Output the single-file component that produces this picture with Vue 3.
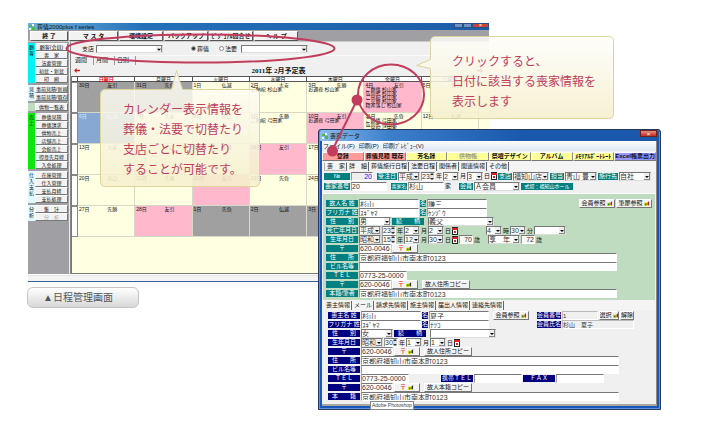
<script setup>
const mainMenu = ['終 了', 'マ ス タ', '環境設定', 'バックアップ', 'ﾋﾞｼﾞｭｱﾙ問合せ', 'ヘ ル プ']

const sideGroups = [
  { tag: '顧 客', tone: 'cyan', items: ['顧客(会員)', '喪　家', '法要管理', '初盆・新盆', '印　刷'] },
  { tag: '見 積', tone: 'pale', items: ['事前見積/新規', '事前見積/既存'] },
  { tag: '', tone: 'mint', items: ['供物一覧表'] },
  { tag: '売 上', tone: 'lime', items: ['葬儀見積', '葬儀請求', '供物売上', '店舗売上', '会館売上', '得意先月締', '入金処理'] },
  { tag: '仕入・支払', tone: 'pale', items: ['在庫管理', '仕入管理', '支払月締', '支払処理'] },
  { tag: '分 析', tone: 'pale', items: ['集　計', '分　析'] },
]

const weekdays = ['日曜日', '月曜日', '火曜日', '水曜日', '木曜日', '金曜日', '土曜日']
const day = (n, luck, tone = '', ev = []) => ({ n, luck, tone, ev })
const weeks = [
  [day(30, '友引', 'grey'), day(31, '先負', 'grey'), day(1, '仏滅'), day(2, '大安', '', ['ご納棺 杉山家']), day(3, '先勝', '', ['お通夜 杉山家']),
    day(4, '友引', 'pink', ['ご葬儀 杉山家', '告別式 杉山家', 'ご出棺 杉山家', 'ご火葬 杉山家', '精進落し 杉山家']), day(5, '先負')],
  [day(6, '仏滅', 'blue'), day(7, '大安'), day(8, '赤口'), day(9, '先勝', '', ['ご納棺 弓田家']), day(10, '友引', 'pink', ['お通夜 弓田家']),
    day(11, '先負', '', ['ご葬儀 弓田家', '告別式 弓田家', 'ご出棺 弓田家']), day(12, '仏滅')],
  [day(13, '大安'), day(14, '赤口'), day(15, '先勝'), day(16, '友引', 'pink'), day(17, '先負'), day(18, '仏滅'), day(19, '大安')],
  [day(20, '赤口'), day(21, '先勝'), day(22, '友引', 'pink'), day(23, '先負'), day(24, '仏滅'), day(25, '大安'), day(26, '赤口')],
  [day(27, '先勝'), day(28, '友引', 'pink'), day(1, '先負', 'grey'), day(2, '仏滅', 'grey'), day(3, '大安', 'grey'), day(4, '赤口', 'grey'), day(5, '先勝', 'grey')],
]

const actions = [
  ['登録', 'rose'], ['葬儀見積 既存', 'rose'], ['芳名録', 'lemon'], ['供物帳', 'lemon off'],
  ['祭壇デザイン', 'lemon'], ['アルバム', 'lemon'], ['ﾒﾓﾘｱﾙﾎﾟｰﾄﾚｰﾄ', 'lemon'], ['Excel帳票出力', 'violet'],
]
const tabs = ['喪　家', '詳　細', '葬儀施行日程', '法要日程', '関係者', '関連情報', 'その他']
const subTabs = ['喪主情報', 'メール', '請求先情報', '施主情報', '届出人情報', '連絡先情報']

// Row items: [kind, width step, text, extra class]
const L = (w, v) => ({ k: 'label', w, v })
const I = (w, v = '', c = '') => ({ k: 'input', w, v, c })
const S = (w, v = '') => ({ k: 'select', w, v })
const N = (v) => ({ k: 'spin', w: 14, v })
const T = (v) => ({ k: 'text', w: 6, v })
const B = (w, v, icon = false) => ({ k: 'button', w, v, icon })
const G = (w) => ({ k: 'gap', w })
const C = () => ({ k: 'cal', w: 6 })
const post = (v) => ({ k: 'post', w: 26, v })

let serial = 0
const build = (rows) => rows.map((row) => {
  let caption = ''
  const out = row.map((it) => {
    if (it.k === 'label') caption = it.v
    return { ...it, id: 'f' + ++serial, name: caption }
  })
  out.forEach((it, i) => {
    if (it.k !== 'label') return
    const field = out.slice(i + 1).find((o) => ['input', 'select', 'spin'].includes(o.k))
    it.target = field && field.id
  })
  return out
})

const address = '京都府福知山市南本町0123'
const groups = [
  { cls: 'head', rows: build([
    [L(26, '№'), I(22, '20', 'num'), G(2), L(20, '受注日'), S(22, '平成'), N('23'), T('年'), S(16, '2'), T('月'), S(16, '3'), T('日'), C(),
      L(14, '支店'), S(36, '福知山店'), L(14, '担当'), S(32, '青山 豊'), L(20, '施行先'), S(32, '自社')],
    [L(26, '喪家番号'), I(36, '20'), G(2), L(16, '喪家名'), I(36, '杉山'), T('家'), G(6), L(14, '会員'), S(46, 'Ａ会員'), L(52, '式場：福知山ホール')],
  ]) },
  { cls: 'deceased', rows: build([
    [L(32, '故人名 姓'), I(60, '杉山'), L(6, '名'), I(60, '謙三'), { k: 'push' }, B(36, '会員参照', true), B(36, '筆屡参照', true)],
    [L(32, 'フリガナ 姓'), I(60, 'ｽｷﾞﾔﾏ'), L(6, '名'), I(60, 'ｹﾝｿﾞｳ')],
    [L(32, '性　　別'), S(32, '男'), L(32, '続　　柄'), G(2), S(66, '義父')],
    [L(32, '死亡年月日'), S(22, '平成'), N('23'), T('年'), S(16, '2'), T('月'), S(16, '2'), T('日'), C(), G(26), S(16, '4'), T('時'), S(16, '30'), T('分'), S(32)],
    [L(32, '生年月日'), S(22, '昭和'), N('15'), T('年'), S(16, '12'), T('月'), S(16, '30'), T('日'), C(), I(14, '70', 'right'), T('歳'), G(6), S(32, '享　年'), I(14, '72', 'right'), T('歳')],
    [L(32, '〒'), I(32, '620-0046'), post('住所検索')],
    [L(32, '住　　所'), I(260, address)],
    [L(32, 'ビル名等'), I(260)],
    [L(32, 'ＴＥＬ'), I(48, '0773-25-0000')],
    [L(32, '〒'), I(32, '620-0046'), post('住所検索'), G(2), B(48, '故人住所コピー')],
    [L(32, '本籍/筆者'), I(260, address)],
  ]) },
  { cls: 'mourner', rows: build([
    [L(32, '喪主名 姓'), I(60, '杉山'), L(6, '名'), I(60, '夏子'), G(2), B(36, '会員参照', true), G(6), L(24, '会員番号'), I(36, '1', 'flat'), B(20, '選択', true), B(14, '解除')],
    [L(32, 'フリガナ 姓'), I(60, 'ｽｷﾞﾔﾏ'), L(6, '名'), I(60, 'ﾅﾂｺ'), G(46), L(24, '会員氏名'), I(72, '杉山　夏子', 'flat')],
    [L(32, '性　　別'), S(32, '女'), L(32, '続　　柄'), G(2), S(66)],
    [L(32, '生年月日'), S(22, '昭和'), N('30'), T('年'), S(16, '1'), T('月'), S(16, '1'), T('日'), C()],
    [L(32, '〒'), I(32, '620-0046'), post('住所検索'), G(2), B(48, '故人住所コピー')],
    [L(32, '住　　所'), I(260, address)],
    [L(32, 'ビル名等'), I(260)],
    [L(32, 'ＴＥＬ'), I(48, '0773-25-0000'), G(30), L(32, '携帯ＴＥＬ'), I(48), L(32, 'ＦＡＸ'), I(48)],
    [L(32, '〒'), I(32, '620-0046'), post('住所検索'), G(2), B(48, '故人本籍コピー')],
    [L(32, '本　　籍'), I(260, address)],
  ]) },
]
</script>

<template>
  <main class="stage">
    <section class="window schedule">
      <header class="titlebar">
        <svg class="appicon" viewBox="0 0 6 6"><path d="M0 1h3v2H0zM3 3h3v3H3z" fill="#4db848" /><path d="M3 0h2v2H3zM0 4h2v2H0z" fill="#fff" /></svg>
        <span class="caption">葬儀2000plus f series</span>
        <span class="winbtns"><i></i><i></i><i class="close">×</i></span>
      </header>
      <nav class="menu">
        <button v-for="m in mainMenu" :key="m" type="button">{{ m }}</button>
      </nav>
      <div class="body">
        <aside class="side">
          <div v-for="(g, gi) in sideGroups" :key="gi" class="group">
            <span class="tag" :class="g.tone">{{ g.tag }}</span>
            <div class="items">
              <button v-for="s in g.items" :key="s" type="button" :disabled="s === '分　析'">{{ s }}</button>
            </div>
          </div>
        </aside>
        <div class="work">
          <div class="filter">
            <label for="branch">支店</label>
            <select id="branch"><option></option></select>
            <label class="radio first"><input type="radio" name="kind" checked>葬儀</label>
            <label class="radio"><input type="radio" name="kind">法要</label>
            <select aria-label="法要"><option></option></select>
          </div>
          <div class="views"><a href="#week">週間</a><a href="#month">月間</a><a href="#day">日別</a></div>
          <div class="month">
            <svg class="arrow" viewBox="0 0 7 6"><path d="M0 3l3-3v2h4v2H3v2z" fill="#d01818" /></svg>
            <h1>2011年 2月予定表</h1>
            <svg class="arrow" viewBox="0 0 7 6"><path d="M7 3L4 0v2H0v2h4v2z" fill="#d01818" /></svg>
          </div>
          <div class="sheet">
            <table>
              <thead><tr><th class="edge"></th><th v-for="w in weekdays" :key="w">{{ w }}</th></tr></thead>
              <tbody>
                <tr v-for="(wk, wi) in weeks" :key="wi">
                  <th class="edge"></th>
                  <td v-for="(d, di) in wk" :key="di" :class="d.tone">
                    <div class="date"><span>{{ d.n }}日</span><span>{{ d.luck }}</span></div>
                    <div v-for="e in d.ev" :key="e" class="event">{{ e }}</div>
                  </td>
                </tr>
              </tbody>
            </table>
          </div>
        </div>
      </div>
      <footer class="status"></footer>
    </section>

    <p class="plate">▲日程管理画面</p>

    <section class="window dialog">
      <header class="titlebar">
        <svg class="appicon" viewBox="0 0 6 6"><path d="M0 1h3v2H0zM3 3h3v3H3z" fill="#4db848" /><path d="M3 0h2v2H3zM0 4h2v2H0z" fill="#fff" /></svg>
        <span class="caption">喪家データ</span>
        <button type="button" class="close" aria-label="閉じる">×</button>
      </header>
      <div class="client">
        <nav class="bar"><span>ファイル(F)</span><span>印刷(P)</span><span>印刷ﾌﾟﾚﾋﾞｭｰ(V)</span></nav>
        <div class="actions"><button v-for="a in actions" :key="a[0]" type="button" :class="a[1]">{{ a[0] }}</button></div>
        <template v-for="g in groups" :key="g.cls">
          <div v-if="g.cls === 'head'" class="tabs"><a v-for="t in tabs" :key="t" href="#tab">{{ t }}</a></div>
          <div v-if="g.cls === 'mourner'" class="tabs sub"><a v-for="t in subTabs" :key="t" href="#sub">{{ t }}</a></div>
          <div class="panel" :class="g.cls">
            <div v-for="(row, ri) in g.rows" :key="ri" class="line">
              <template v-for="it in row" :key="it.id">
                <label v-if="it.k === 'label'" class="cap" :class="'w' + it.w" :for="it.target">{{ it.v }}</label>
                <input v-else-if="it.k === 'input'" :id="it.id" type="text" :class="['w' + it.w, it.c]" :value="it.v" :aria-label="it.name">
                <input v-else-if="it.k === 'spin'" :id="it.id" type="text" class="w14 spin" :value="it.v" :aria-label="it.name">
                <select v-else-if="it.k === 'select'" :id="it.id" :class="'w' + it.w" :aria-label="it.name"><option>{{ it.v }}</option></select>
                <button v-else-if="it.k === 'button'" type="button" :class="'w' + it.w">{{ it.v }}<svg v-if="it.icon" viewBox="0 0 7 6"><path d="M0 2h4v4H0z" fill="#e8d800" /><path d="M1 3h2v2H1z" fill="#0a8a3a" /><path d="M4 2l2-2v6L4 4z" fill="#c02020" /></svg></button>
                <button v-else-if="it.k === 'post'" type="button" class="w26 post" :aria-label="it.v"><b>〒</b><svg viewBox="0 0 7 6"><path d="M0 2h4v4H0z" fill="#e8d800" /><path d="M1 3h2v2H1z" fill="#0a8a3a" /><path d="M4 2l2-2v6L4 4z" fill="#333" /></svg></button>
                <span v-else-if="it.k === 'text'" class="unit w6">{{ it.v }}</span>
                <svg v-else-if="it.k === 'cal'" class="w6 calicon" viewBox="0 0 6 8"><path d="M0 0h6v8H0z" fill="#222" /><path d="M1 3h4v4H1z" fill="#fff" /><path d="M0 1h6v2H0zM2 4h2v2H2z" fill="#e02020" /></svg>
                <span v-else-if="it.k === 'push'" class="push"></span>
                <span v-else :class="'w' + it.w"></span>
              </template>
            </div>
          </div>
        </template>
      </div>
    </section>

    <span class="tip">Adobe Photoshop</span>

    <svg class="overlay" width="715" height="428" viewBox="0 0 715 428">
      <defs>
        <linearGradient id="paper" x1="0" y1="0" x2="0" y2="1">
          <stop offset="0" stop-color="#fefefa" stop-opacity=".84" />
          <stop offset="1" stop-color="#f5efcc" stop-opacity=".88" />
        </linearGradient>
      </defs>
      <g fill="none" stroke="#c23c5c" stroke-width="2">
        <ellipse cx="200.500" cy="48.500" rx="134" ry="14" />
        <ellipse cx="391" cy="94.500" rx="33" ry="30" />
        <path d="M357 100L332 151" />
      </g>
      <g fill="#c23c5c"><circle cx="357" cy="100" r="5.500" /><circle cx="332.500" cy="151" r="5.500" /></g>
      <g fill="url(#paper)" stroke="#dcd49c">
        <path d="M105.500 89.500H171.500L176.500 70.500L182.500 89.500H254.500q5 0 5 5V181.500q0 5-5 5H105.500q-5 0-5-5V94.500q0-5 5-5z" />
        <path d="M435.500 36.500H608.500q5 0 5 5V113.500q0 5-5 5H435.500q-5 0-5-5V68.500L416.500 65.500L430.500 59.500V41.500q0-5 5-5z" />
      </g>
    </svg>
    <p class="note switch">カレンダー表示情報を<br>葬儀・法要で切替たり<br>支店ごとに切替たり<br>することが可能です。</p>
    <p class="note click">クリックすると、<br>日付に該当する喪家情報を<br>表示します</p>
  </main>
</template>

<style>
body { background: #fff; }
</style>

<style scoped>
* { box-sizing: border-box; }
.stage { position: relative; min-height: 100vh; overflow: hidden; font: 6px/8px "Liberation Sans", "Noto Sans CJK JP", sans-serif; color: #111; }
button, input, select { font: inherit; color: inherit; margin: 0; padding: 0; border-radius: 0; min-width: 0; }
a { color: inherit; text-decoration: none; }
button { background: #f2f2f2; border: 1px solid; border-color: #fff #777 #777 #fff; white-space: nowrap; overflow: hidden; line-height: 6px; }
select { appearance: none; border: 1px solid; border-color: #777 #ddd #ddd #777; background: #fff url("data:image/svg+xml,%3Csvg xmlns='http://www.w3.org/2000/svg' viewBox='0 0 6 7'%3E%3Cpath d='M0 0h6v7H0z' fill='%23eee'/%3E%3Cpath d='M5 0h1v7H0V6h5z' fill='%23888'/%3E%3Cpath d='M1 3h4L3 5z' fill='%23000'/%3E%3C/svg%3E") right center / 6px 7px no-repeat; }
.window { position: absolute; }
.titlebar { display: flex; align-items: center; gap: 2px; }
.appicon { width: 6px; height: 6px; flex: none; }
.caption { flex: 1; white-space: nowrap; }

.schedule { left: 28px; top: 23px; width: 461px; background: #f0f0f0; border-bottom: 1px solid #365f96; }
.schedule .titlebar { height: 7px; padding-left: 1px; background: linear-gradient(90deg, #6fb4dc, #2470b8 25%, #1c5ca8); }
.winbtns { display: flex; align-self: flex-start; }
.winbtns i { width: 9px; height: 5px; background: #6d94c4; border: 1px solid #284f86; }
.winbtns .close { width: 17px; background: #cc4433; color: #fff; font-style: normal; line-height: 3px; text-align: center; }
.menu { display: flex; background: #a0a0a4; padding: 1px 2px 0; height: 12px; gap: 1px; border-bottom: 1px solid #ccc; }
.menu button { width: 44px; height: 10px; font-weight: bold; border-color: #fff #555 #555 #fff; line-height: 8px; }
.menu button:first-child { width: 38px; }
.menu button:nth-child(2) { width: 49px; }
.body { display: flex; }
.side { width: 42px; background: #a0a0a4; border-right: 1px solid #eee; display: flex; flex-direction: column; gap: 2px; padding: 1px 1px 0 0; flex: none; }
.group { display: flex; }
.tag { width: 7px; font-size: 5px; line-height: 6px; padding: 1px; text-align: center; word-break: break-all; }
.cyan { background: #00f4f4; }
.pale { background: #e0f8ff; }
.mint { background: #c0dcc0; }
.lime { background: #0ce80c; }
.items { display: flex; flex-direction: column; flex: 1; }
.items button { height: 8px; font-size: 5px; }
.items button:disabled { color: #aaa; }
.work { flex: 1; min-width: 0; border-left: 1px solid #888; }
.filter { display: flex; align-items: center; height: 14px; padding-left: 11px; gap: 2px; border-bottom: 1px solid #fafafa; }
.filter select { width: 67px; height: 8px; }
.radio { display: flex; align-items: center; gap: 1px; margin-left: 8px; margin-right: 2px; }
.radio.first { margin-left: 26px; margin-right: 0; }
.radio input { appearance: none; width: 5px; height: 5px; border: 1px solid #888; border-radius: 50%; background: #fff; }
.radio input:checked { background: #333; border-color: #aaa; }
.views { display: flex; padding-left: 4px; height: 9px; }
.views a { padding-right: 6px; margin-right: 2px; line-height: 9px; border-right: 1px solid #999; }
.month { display: flex; align-items: center; justify-content: space-between; height: 11px; padding: 0 6px 0 3px; }
.month h1 { margin: 0; font: bold 7px/10px "Liberation Serif", "Noto Sans CJK JP", serif; }
.arrow { width: 6px; height: 5px; }
.sheet { background: #ffffe1; min-height: 198px; padding-right: 10px; border-left: 1px solid #777; border-bottom: 1px solid #777; }
table { width: 100%; table-layout: fixed; border-spacing: 0; font-size: 5px; line-height: 4px; }
th { height: 6px; padding: 0; background: #fff; border: solid #555; border-width: 1px 1px 1px 0; font-weight: normal; line-height: 4px; }
th.edge { width: 6px; }
tbody th { border-color: #888; }
thead th:nth-child(2) { color: #e00; font-weight: bold; }
thead th:last-child { color: #22c; }
td { height: 31px; padding: 1px; vertical-align: top; border: solid #d8d8c8; border-width: 0 1px 1px 0; }
.date { display: flex; justify-content: space-between; padding-right: 16px; }
.event { white-space: nowrap; }
.grey { background: #a0a0a0; }
.pink { background: #ffb8cc; }
.blue { background: #88a8d4; color: #dde8f8; }
.status { height: 7px; border-top: 1px solid #fff; background: linear-gradient(#e4e4e4 1px, #f4f4f4 1px); }

.plate { position: absolute; left: 27px; top: 287px; width: 112px; margin: 0; padding-left: 15px; font-size: 10px; line-height: 19px; color: #555; border: 1px solid #c4c4c4; border-radius: 6px; background: linear-gradient(#fff, #d8d8d8); }

.dialog { left: 318px; top: 129px; width: 343px; padding: 0 3px 3px; background: #1a56bc; border: 1px solid #26385c; border-radius: 3px 3px 0 0; box-shadow: inset 0 0 0 1px #5c92dc; }
.dialog .titlebar { height: 11px; margin: 0 -2px; padding: 0 2px; background: linear-gradient(90deg, #8cbcec, #3c80cc 20%, #1a58ac 60%, #1a58ac); border-radius: 2px 2px 0 0; }
.dialog .close { width: 17px; height: 7px; background: linear-gradient(#e89080, #c03020); color: #fff; line-height: 4px; border-color: #702020; align-self: flex-start; }
.client { background: #f0f0f0; border-right: 1px solid #888; border-bottom: 2px solid #a8a8a0; }
.bar { display: flex; gap: 4px; height: 10px; padding-left: 1px; line-height: 10px; background: linear-gradient(#fbfcff, #dfe7f4); }
.actions { display: flex; height: 9px; margin-top: 1px; }
.actions button { flex: 1 1 0; font-weight: bold; line-height: 7px; border-color: #fff #888 #777 #fff; }
.actions .rose { background: #ff9c98; }
.actions .lemon { background: #ffff98; }
.actions .off { color: #a0a080; }
.actions .violet { background: #9c98f8; }
.tabs { display: flex; height: 10px; padding: 1px 0 0 2px; line-height: 8px; background: #f4f4f4; }
.tabs a { padding: 0 1px 0 2px; border-right: 1px solid #666; white-space: nowrap; }
.tabs:not(.sub) a:first-child { border: 1px solid #aaa; border-color: #fff #666 #bbb #aaa; line-height: 7px; }
.panel { padding: 0 2px; }
.head { padding-bottom: 2px; }
.deceased { padding: 5px 3px 2px; border-top: 1px solid #fff; background: #c0dcc0; margin: 0 1px; }
.mourner { padding: 1px 6px 3px; }
.line { display: flex; align-items: center; gap: 1px; height: 9px; }
.head .line { height: 10px; }
.line > * { flex: none; }
.line .push { flex: 1; }
.cap { height: 7px; line-height: 7px; background: #008080; color: #fff; text-align: center; white-space: nowrap; overflow: hidden; }
.mourner .cap { background: #000080; }
.line input, .line select { height: 9px; font-size: 7px; line-height: 7px; color: #333; }
.line input { border: 1px solid; border-color: #777 #fff #fff #999; background: #fff; }
.line input.num { color: #22e; text-align: right; background: #eee; }
.line input.right { text-align: right; background: #f6f6f6; }
.line input.flat { background: #f0f0f0; border-color: #bbb #fff #fff #bbb; font-size: 6px; }
.line input.spin { background: #fff url("data:image/svg+xml,%3Csvg xmlns='http://www.w3.org/2000/svg' viewBox='0 0 4 7'%3E%3Cpath d='M0 0h4v7H0z' fill='%23ddd'/%3E%3Cpath d='M0 2l2-2 2 2zM0 5l2 2 2-2z' fill='%23333'/%3E%3C/svg%3E") right center / 4px 7px no-repeat; }
.line button { height: 9px; line-height: 7px; display: flex; align-items: center; justify-content: center; gap: 1px; }
.line button svg { width: 6px; height: 5px; flex: none; }
.line .post { gap: 2px; }
.post b { color: #e02020; }
.unit { text-align: center; }
.calicon { height: 8px; }
.w6 { width: 6px; }
.w2 { width: 2px; }
.w14 { width: 14px; }
.w16 { width: 16px; }
.w20 { width: 20px; }
.w22 { width: 22px; }
.w24 { width: 24px; }
.w26 { width: 26px; }
.w30 { width: 30px; }
.w32 { width: 32px; }
.w36 { width: 36px; }
.w46 { width: 46px; }
.w48 { width: 48px; }
.w52 { width: 52px; }
.w60 { width: 60px; }
.w66 { width: 66px; }
.w72 { width: 72px; }
.w260 { width: 258px; }
.cap.w16, .cap.w52 { font-size: 5px; }

.tip { position: absolute; left: 370px; top: 401px; padding: 0 1px; font-size: 5px; line-height: 7px; color: #444; background: #fff; border: 1px solid #888; white-space: nowrap; }
.overlay { position: absolute; left: 0; top: 0; pointer-events: none; }
.note { position: absolute; margin: 0; font-size: 12px; line-height: 20px; color: #c23c5c; white-space: nowrap; }
.switch { left: 123px; top: 100px; }
.click { left: 452px; top: 52px; }
</style>
